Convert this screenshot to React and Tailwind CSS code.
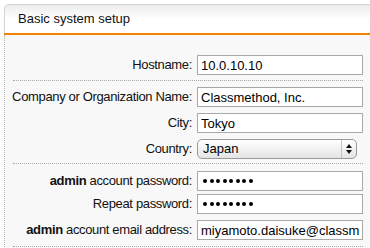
const font = { fontFamily: '"Liberation Sans", Arial, sans-serif' };

function Field({ label, children, className = '' }) {
    return (
        <div className={`flex items-center ${className}`}>
            <div className="flex w-[184px] shrink-0 justify-end pr-[5px] text-[13px] leading-[20px] tracking-[-0.35px] whitespace-nowrap text-[#111]">
                <span>{label}</span>
            </div>
            {children}
        </div>
    );
}

function TextBox({ value }) {
    return (
        <input
            type="text"
            readOnly
            value={value}
            className="h-[20px] w-[166px] shrink-0 border border-[#a9a9a9] bg-white px-[3px] text-[13px] text-black outline-none"
            style={font}
        />
    );
}

function Dots() {
    return (
        <div className="flex h-[20px] w-[166px] shrink-0 items-center gap-[2.5px] border border-[#a9a9a9] bg-white pl-[5px]">
            {Array.from({ length: 8 }).map((_, i) => (
                <span key={i} className="h-[4px] w-[4px] rounded-full bg-black" />
            ))}
        </div>
    );
}

function Select({ value }) {
    return (
        <div className="flex h-[20px] w-[160px] shrink-0 items-stretch rounded-[5px] border border-[#9a9a9a] bg-gradient-to-b from-white to-[#e4e4e4] shadow-[inset_0_1px_0_#fff]">
            <div className="flex flex-1 items-center pl-[5px] text-[13px] text-black">{value}</div>
            <div className="flex w-[15px] flex-col items-center justify-center gap-[2px] border-l border-[#c4c4c4]">
                <svg width="6" height="4" viewBox="0 0 6 4"><path d="M3 0 L6 4 L0 4 Z" fill="#111" /></svg>
                <svg width="6" height="4" viewBox="0 0 6 4"><path d="M0 0 L6 0 L3 4 Z" fill="#111" /></svg>
            </div>
        </div>
    );
}

export default function App() {
    return (
        <div className="h-[248px] w-[370px] overflow-hidden bg-white pl-[4px] pt-[4px]" style={font}>
            <div className="w-[400px]">
                <div className="flex h-[29px] items-center rounded-tl-[5px] border-t border-l border-[#d4d4d4] bg-gradient-to-b from-[#ececec] via-white to-white pl-[13px] text-[13px] text-[#111]">
                    Basic system setup
                </div>
                <div className="h-[2px] bg-[#ef8200]" />
                <div className="h-[250px] border-l border-dotted border-[#b5b5b5] bg-[#f8f8f8] pl-[8px]">
                    <div className="w-[350px] border-b border-dotted border-[#a8a8a8] pt-[20px] pb-[5px]">
                        <Field label="Hostname:">
                            <TextBox value="10.0.10.10" />
                        </Field>
                    </div>
                    <div className="flex w-[350px] flex-col gap-[6px] border-b border-dotted border-[#a8a8a8] pt-[6px] pb-[4px]">
                        <Field label="Company or Organization Name:">
                            <TextBox value="Classmethod, Inc." />
                        </Field>
                        <Field label="City:">
                            <TextBox value="Tokyo" />
                        </Field>
                        <Field label="Country:">
                            <Select value="Japan" />
                        </Field>
                    </div>
                    <div className="w-[350px] border-b border-dotted border-[#a8a8a8] pt-[7px] pb-[6px]">
                        <Field label={<><b>admin</b> account password:</>}>
                            <Dots />
                        </Field>
                        <Field label="Repeat password:" className="mt-[3px]">
                            <Dots />
                        </Field>
                        <Field label={<><b>admin</b> account email address:</>} className="mt-[6px]">
                            <TextBox value="miyamoto.daisuke@classmethod.jp" />
                        </Field>
                    </div>
                </div>
            </div>
        </div>
    );
}
